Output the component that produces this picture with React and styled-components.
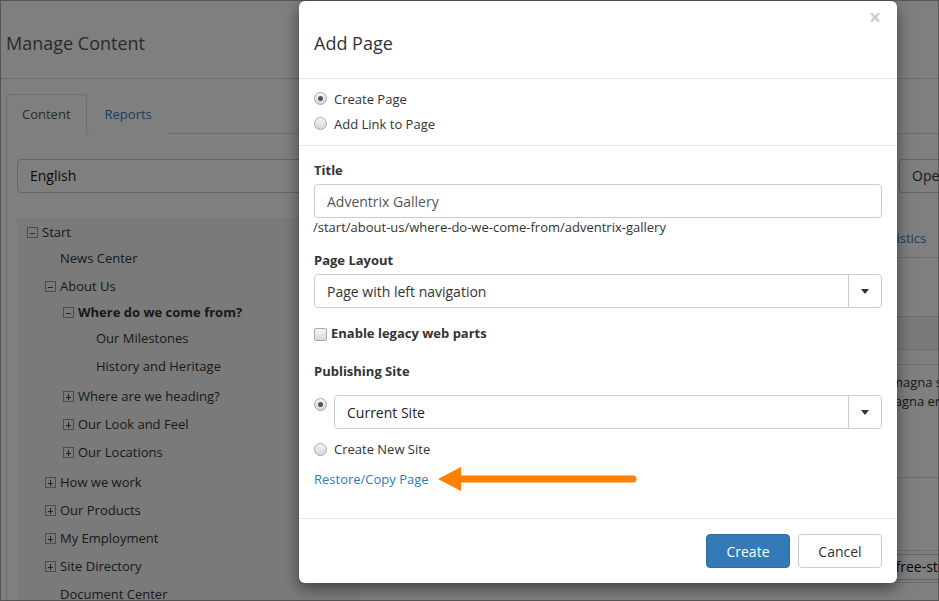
import React from "react";
import styled, { createGlobalStyle } from "styled-components";

const GlobalStyle = createGlobalStyle`
  html, body {
    margin: 0;
    padding: 0;
    background: #fff;
  }
  body {
    font-family: "Open Sans", "Liberation Sans", sans-serif;
    font-size: 13px;
    color: #333;
  }
  * {
    box-sizing: border-box;
  }
`;

const treeItems = [
  { label: "Start", depth: 0, toggle: "open", gap: -2 },
  { label: "News Center", depth: 1, gap: 0 },
  { label: "About Us", depth: 1, toggle: "open", gap: -2 },
  { label: "Where do we come from?", depth: 2, toggle: "open", bold: true, gap: -2 },
  { label: "Our Milestones", depth: 3, gap: 0 },
  { label: "History and Heritage", depth: 3, gap: 2 },
  { label: "Where are we heading?", depth: 2, toggle: "closed", gap: 0 },
  { label: "Our Look and Feel", depth: 2, toggle: "closed", gap: 0 },
  { label: "Our Locations", depth: 2, toggle: "closed", gap: 2 },
  { label: "How we work", depth: 1, toggle: "closed", gap: 0 },
  { label: "Our Products", depth: 1, toggle: "closed", gap: 0 },
  { label: "My Employment", depth: 1, toggle: "closed", gap: 0 },
  { label: "Site Directory", depth: 1, toggle: "closed", gap: 0 },
  { label: "Document Center", depth: 1, gap: 0 },
];

export default function App() {
  return (
    <>
      <GlobalStyle />
      <Frame>
        <Page>
          <PageHeader>
            <PageTitle>Manage Content</PageTitle>
          </PageHeader>
          <Main>
            <TabBar>
              <Tab $active>Content</Tab>
              <Tab>Reports</Tab>
            </TabBar>
            <Pane>
              <TopRow>
                <Field $width={872}>English</Field>
                <PlainButton>Open...</PlainButton>
              </TopRow>
              <Columns>
                <Tree>
                  {treeItems.map((item) => (
                    <TreeRow key={item.label} $depth={item.depth} $gap={item.gap}>
                      {item.toggle ? <Toggle $open={item.toggle === "open"} /> : <ToggleSpacer />}
                      <TreeLabel $bold={item.bold}>{item.label}</TreeLabel>
                    </TreeRow>
                  ))}
                </Tree>
                <Detail>
                  <DetailTabs>
                    <DetailTab>Page Properties</DetailTab>
                    <DetailTab>Web Parts</DetailTab>
                    <DetailTab>Permissions</DetailTab>
                    <DetailTab>Versions</DetailTab>
                    <DetailTab>Statistics</DetailTab>
                  </DetailTabs>
                  <DetailBody>
                    <TableHead />
                    <TableGap />
                    <Paragraph>
                      Lorem ipsum dolor sit amet, consetetur sadipscing elitr, sed diam nonumy eirmod magna sed
                      <br />
                      Duis autem vel eum iriure dolor in hendrerit in vulputate velit esse, aliquyam sed magna erat
                    </Paragraph>
                    <UrlRow>
                      <Field $width={600} $pad={468} $small>
                        images/free-stock-photo.jpg
                      </Field>
                    </UrlRow>
                  </DetailBody>
                </Detail>
              </Columns>
            </Pane>
          </Main>
        </Page>

        <Backdrop />

        <Modal>
          <ModalHeader>
            <ModalTitle>Add Page</ModalTitle>
            <Close>×</Close>
          </ModalHeader>
          <ChoiceSection>
            <ChoiceRow>
              <Radio $checked />
              Create Page
            </ChoiceRow>
            <ChoiceRow>
              <Radio />
              Add Link to Page
            </ChoiceRow>
          </ChoiceSection>
          <ModalBody>
            <Label>Title</Label>
            <Input>Adventrix Gallery</Input>
            <Help>/start/about-us/where-do-we-come-from/adventrix-gallery</Help>

            <Label $top={15}>Page Layout</Label>
            <Select>
              <SelectValue>Page with left navigation</SelectValue>
              <Caret />
            </Select>

            <CheckRow>
              <Checkbox />
              Enable legacy web parts
            </CheckRow>

            <Label $top={19}>Publishing Site</Label>
            <SiteRow>
              <Radio $checked $offset={3} />
              <Select $grow>
                <SelectValue $dark>Current Site</SelectValue>
                <Caret />
              </Select>
            </SiteRow>
            <ChoiceRow $top={10} $h={20}>
              <Radio />
              Create New Site
            </ChoiceRow>

            <LinkRow>
              <Link>Restore/Copy Page</Link>
              <svg width="200" height="26" viewBox="0 0 200 26">
                <line x1="20" y1="13" x2="195" y2="13" stroke="#ff7f00" strokeWidth="7" strokeLinecap="round" />
                <polygon points="0,13 23,1 23,25" fill="#ff7f00" />
              </svg>
            </LinkRow>
          </ModalBody>
          <ModalFooter>
            <PrimaryButton>Create</PrimaryButton>
            <DefaultButton>Cancel</DefaultButton>
          </ModalFooter>
        </Modal>
      </Frame>
    </>
  );
}

const Frame = styled.div`
  position: relative;
  width: 939px;
  height: 601px;
  overflow: hidden;
  background: #fff;

  &::after {
    content: "";
    position: absolute;
    inset: 0;
    border: 1px solid rgba(0, 0, 0, 0.32);
    pointer-events: none;
    z-index: 20;
  }
`;

const Page = styled.div`
  width: 1100px;
`;

const PageHeader = styled.header`
  height: 79px;
  padding: 33px 6px 0;
  border-bottom: 1px solid #ddd;
`;

const PageTitle = styled.h1`
  margin: 0;
  font-size: 18px;
  line-height: 20px;
  font-weight: 400;
  color: #555;
`;

const Main = styled.div`
  padding: 15px 0 0 6px;
`;

const TabBar = styled.div`
  display: flex;
  gap: 2px;
  height: 40px;
  border-bottom: 1px solid #ddd;
`;

const Tab = styled.div`
  height: 40px;
  padding: 0 15px;
  line-height: 38px;
  border: 1px solid ${(p) => (p.$active ? "#ddd" : "transparent")};
  border-bottom: none;
  border-radius: 4px 4px 0 0;
  background: #fff;
  color: ${(p) => (p.$active ? "#555" : "#337ab7")};
`;

const Pane = styled.div`
  border-left: 1px solid #ddd;
  padding: 25px 10px;
  height: 500px;
`;

const TopRow = styled.div`
  display: flex;
  gap: 10px;
`;

const Field = styled.div`
  flex: none;
  width: ${(p) => p.$width}px;
  height: ${(p) => (p.$small ? 26 : 34)}px;
  padding: 0 12px 0 ${(p) => p.$pad || 12}px;
  border: 1px solid #ccc;
  border-radius: 4px;
  font-size: 14px;
  line-height: ${(p) => (p.$small ? 24 : 32)}px;
  color: #111;
  background: #fff;
  white-space: nowrap;
`;

const PlainButton = styled.div`
  flex: none;
  height: 34px;
  padding: 0 12px;
  border: 1px solid #ccc;
  border-radius: 4px;
  font-size: 14px;
  line-height: 32px;
  color: #333;
  background: #fff;
`;

const Columns = styled.div`
  display: flex;
  gap: 15px;
  margin-top: 25px;
`;

const Tree = styled.div`
  flex: none;
  width: 343px;
  height: 400px;
  padding: 0 10px;
  background: #f5f5f5;
`;

const TreeRow = styled.div`
  display: flex;
  align-items: center;
  height: 28px;
  margin-bottom: ${(p) => p.$gap}px;
  padding-left: ${(p) => p.$depth * 18}px;
`;

const Toggle = styled.span`
  position: relative;
  flex: none;
  width: 11px;
  height: 11px;
  margin-right: 4px;
  border: 1px solid #999;
  background: #f5f5f5;

  &::before {
    content: "";
    position: absolute;
    left: 2px;
    right: 2px;
    top: 5px;
    height: 1px;
    background: #444;
  }

  &::after {
    content: "";
    display: ${(p) => (p.$open ? "none" : "block")};
    position: absolute;
    top: 2px;
    bottom: 1px;
    left: 4px;
    width: 1px;
    background: #444;
  }
`;

const ToggleSpacer = styled.span`
  flex: none;
  width: 15px;
`;

const TreeLabel = styled.span`
  font-weight: ${(p) => (p.$bold ? 700 : 400)};
  color: #333;
  white-space: nowrap;
`;

const Detail = styled.div`
  flex: none;
  width: 700px;
`;

const DetailTabs = styled.div`
  display: flex;
  gap: 2px;
  height: 40px;
  padding-left: 72px;
  border-bottom: 1px solid #ddd;
`;

const DetailTab = styled.div`
  flex: none;
  padding: 0 15px;
  line-height: 40px;
  color: #337ab7;
  white-space: nowrap;
`;

const DetailBody = styled.div`
  padding-top: 58px;
`;

const TableHead = styled.div`
  height: 34px;
  border-top: 1px solid #ddd;
  border-bottom: 1px solid #ddd;
  background: #f5f5f5;
`;

const TableGap = styled.div`
  height: 15px;
  border-bottom: 1px solid #ddd;
`;

const Paragraph = styled.p`
  margin: 0;
  height: 113px;
  padding: 8px 10px 0 16px;
  line-height: 19px;
  font-size: 13px;
  color: #333;
  white-space: nowrap;
  border-bottom: 1px solid #ddd;
`;

const UrlRow = styled.div`
  margin-top: 72px;
  padding: 3px 0 2px;
  border-top: 1px solid #ddd;
  border-bottom: 1px solid #ddd;
`;

const Backdrop = styled.div`
  position: absolute;
  inset: 0;
  background: rgba(0, 0, 0, 0.5);
  z-index: 5;
`;

const Modal = styled.div`
  position: absolute;
  left: 299px;
  top: 1px;
  width: 598px;
  height: 582px;
  display: flex;
  flex-direction: column;
  background: #fff;
  border-radius: 6px;
  box-shadow: 0 5px 15px rgba(0, 0, 0, 0.5);
  z-index: 6;
`;

const ModalHeader = styled.div`
  display: flex;
  justify-content: space-between;
  align-items: flex-start;
  height: 78px;
  padding: 0 16px 0 15px;
  border-bottom: 1px solid #e5e5e5;
`;

const ModalTitle = styled.h4`
  margin: 32px 0 0;
  font-size: 18px;
  line-height: 20px;
  font-weight: 400;
  color: #333;
`;

const Close = styled.span`
  margin-top: 6px;
  font-size: 21px;
  line-height: 21px;
  font-weight: 700;
  color: #000;
  opacity: 0.2;
`;

const ChoiceSection = styled.div`
  padding: 7px 15px 9px;
  border-bottom: 1px solid #e5e5e5;
`;

const ChoiceRow = styled.label`
  display: flex;
  align-items: center;
  gap: 7px;
  height: ${(p) => p.$h || 25}px;
  margin-top: ${(p) => p.$top || 0}px;
  color: #333;
`;

const Radio = styled.span`
  flex: none;
  display: flex;
  align-items: center;
  justify-content: center;
  align-self: ${(p) => (p.$offset ? "flex-start" : "auto")};
  margin-top: ${(p) => p.$offset || 0}px;
  width: 13px;
  height: 13px;
  border-radius: 50%;
  border: 1px solid #a9a9a9;
  background: linear-gradient(#f4f4f4, #d6d6d6);

  &::after {
    content: "";
    display: ${(p) => (p.$checked ? "block" : "none")};
    width: 5px;
    height: 5px;
    border-radius: 50%;
    background: #555;
  }
`;

const ModalBody = styled.div`
  flex: 1;
  padding: 15px;
`;

const Label = styled.div`
  margin-top: ${(p) => p.$top || 0}px;
  margin-bottom: 5px;
  font-weight: 700;
  line-height: 18px;
  color: #333;
`;

const Input = styled.div`
  height: 34px;
  padding: 0 12px;
  border: 1px solid #ccc;
  border-radius: 4px;
  font-size: 14px;
  line-height: 33px;
  color: #555;
`;

const Help = styled.div`
  line-height: 18px;
  color: #333;
  margin-left: -1px;
`;

const Select = styled.div`
  display: flex;
  flex: ${(p) => (p.$grow ? 1 : "none")};
  height: 34px;
  border: 1px solid #ccc;
  border-radius: 4px;
`;

const SelectValue = styled.div`
  flex: 1;
  padding: 0 12px;
  font-size: 14px;
  line-height: 33px;
  color: ${(p) => (p.$dark ? "#222" : "#333")};
`;

const Caret = styled.div`
  width: 33px;
  border-left: 1px solid #ccc;
  display: flex;
  align-items: center;
  justify-content: center;

  &::after {
    content: "";
    border-top: 5px solid #333;
    border-left: 4px solid transparent;
    border-right: 4px solid transparent;
  }
`;

const CheckRow = styled.label`
  display: flex;
  align-items: center;
  gap: 4px;
  height: 20px;
  margin-top: 15px;
  font-weight: 700;
  color: #333;
`;

const Checkbox = styled.span`
  width: 13px;
  height: 13px;
  margin-top: 2px;
  border: 1px solid #a9a9a9;
  border-radius: 2px;
  background: linear-gradient(#f4f4f4, #d9d9d9);
`;

const SiteRow = styled.div`
  display: flex;
  gap: 7px;
  margin-top: 15px;
`;

const LinkRow = styled.div`
  display: flex;
  align-items: center;
  gap: 9px;
  height: 22px;
  margin-top: 9px;
`;

const Link = styled.a`
  color: #337ab7;
  text-decoration: none;
  line-height: 18px;
`;

const ModalFooter = styled.div`
  display: flex;
  justify-content: flex-end;
  gap: 8px;
  padding: 15px;
  border-top: 1px solid #e5e5e5;
`;

const ButtonBase = styled.button`
  height: 34px;
  width: 84px;
  border-radius: 4px;
  font-family: "Open Sans", "Liberation Sans", sans-serif;
  font-size: 14px;
  cursor: pointer;
`;

const PrimaryButton = styled(ButtonBase)`
  background: #337ab7;
  border: 1px solid #2e6da4;
  color: #fff;
`;

const DefaultButton = styled(ButtonBase)`
  background: #fff;
  border: 1px solid #ccc;
  color: #333;
`;
